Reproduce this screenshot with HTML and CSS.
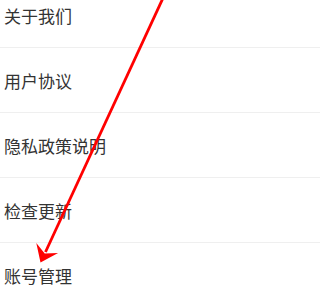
FILE: index.html
```html
<!DOCTYPE html>
<html lang="zh-CN">
<head>
<meta charset="utf-8">
<link rel="stylesheet" href="styles.css">
</head>
<body>
<div class="page">
  <ul class="menu">
    <li class="item">关于我们</li>
    <li class="item">用户协议</li>
    <li class="item">隐私政策说明</li>
    <li class="item">检查更新</li>
    <li class="item">账号管理</li>
  </ul>
  <svg class="arrow" width="234" height="293" viewBox="0 0 234 293">
    <line x1="163.5" y1="-3" x2="45.5" y2="252" stroke="#ff0000" stroke-width="2.8"/>
    <polygon points="40.5,262.5 36.3,243 44.7,253.4 58.1,252.9" fill="#ff0000"/>
  </svg>
</div>
</body>
</html>
```
FILE: styles.css
```css
html, body {
  margin: 0;
  padding: 0;
  background: #ffffff;
}
.page {
  position: relative;
  width: 100%;
  min-width: 234px;
  height: 293px;
  overflow: hidden;
}
.menu {
  list-style: none;
  margin: -17px 0 0 0;
  padding: 0;
}
.item {
  height: 64px;
  display: flex;
  align-items: center;
  padding-left: 4px;
  border-bottom: 1px solid #efefef;
  font-family: "Noto Sans CJK SC", "Noto Sans", sans-serif;
  font-size: 17px;
  color: #333333;
}
.arrow {
  position: absolute;
  left: 0;
  top: 0;
  pointer-events: none;
}
```
